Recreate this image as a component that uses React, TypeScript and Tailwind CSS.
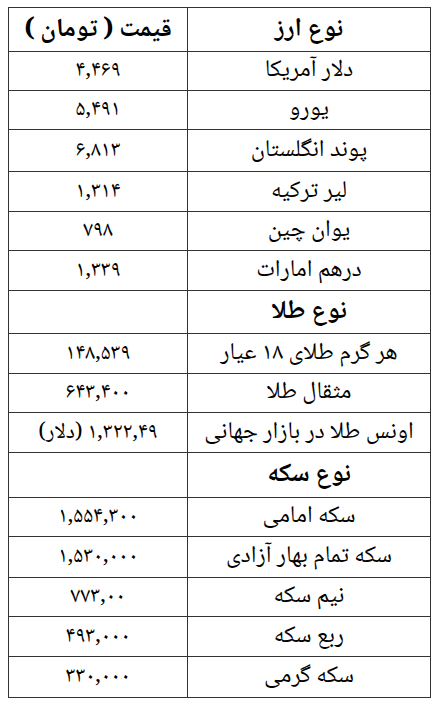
type Row = {
  name: string
  price?: string
  h: string
  kind?: 'head' | 'section'
}

const rows: Row[] = [
  { name: 'نوع ارز', price: 'قیمت ( تومان )', h: 'h-[44px]', kind: 'head' },
  { name: 'دلار آمریکا', price: '۴,۴۶۹', h: 'h-[39px]' },
  { name: 'یورو', price: '۵,۴۹۱', h: 'h-[39px]' },
  { name: 'پوند انگلستان', price: '۶,۸۱۳', h: 'h-[42px]' },
  { name: 'لیر ترکیه', price: '۱,۳۱۴', h: 'h-[40px]' },
  { name: 'یوان چین', price: '۷۹۸', h: 'h-[39px]' },
  { name: 'درهم امارات', price: '۱,۳۳۹', h: 'h-[40px]' },
  { name: 'نوع طلا', h: 'h-[43px]', kind: 'section' },
  { name: 'هر گرم طلای ۱۸ عیار', price: '۱۴۸,۵۳۹', h: 'h-[40px]' },
  { name: 'مثقال طلا', price: '۶۴۳,۴۰۰', h: 'h-[39px]' },
  { name: 'اونس طلا در بازار جهانی', price: '۱,۳۲۲,۴۹ (دلار)', h: 'h-[40px]' },
  { name: 'نوع سکه', h: 'h-[45px]', kind: 'section' },
  { name: 'سکه امامی', price: '۱,۵۵۴,۳۰۰', h: 'h-[39px]' },
  { name: 'سکه تمام بهار آزادی', price: '۱,۵۳۰,۰۰۰', h: 'h-[41px]' },
  { name: 'نیم سکه', price: '۷۷۳,۰۰', h: 'h-[39px]' },
  { name: 'ربع سکه', price: '۴۹۳,۰۰۰', h: 'h-[40px]' },
  { name: 'سکه گرمی', price: '۳۳۰,۰۰۰', h: 'h-[40px]' },
]

export default function App() {
  return (
    <div className="min-h-[705px] bg-white pt-[7px] pl-[8px]">
      <div
        dir="rtl"
        className="flex w-[423px] flex-col border border-[#333] font-['Noto_Naskh_Arabic','DejaVu_Sans',sans-serif] text-black"
      >
        {rows.map((row, i) => {
          const last = i === rows.length - 1
          const bold = row.kind !== undefined
          const nameSize = bold ? 'text-[26px]' : 'text-[24px]'
          const priceSize = row.kind === 'head' ? 'text-[26px]' : 'text-[22px]'
          return (
            <div
              key={row.name}
              className={`flex ${row.h} leading-none ${last ? '' : 'border-b border-[#333]'} ${bold ? 'font-bold' : ''}`}
            >
              <div className={`flex w-[243px] items-center justify-center border-l border-[#333] ${nameSize}`}>
                {row.name}
              </div>
              <div className={`flex flex-1 items-center justify-center ${priceSize}`}>{row.price}</div>
            </div>
          )
        })}
      </div>
    </div>
  )
}
